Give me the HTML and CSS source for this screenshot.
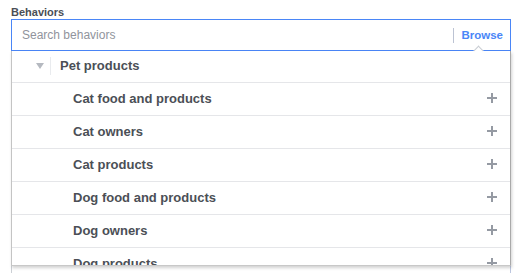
FILE: index.html
```html
<!DOCTYPE html>
<html lang="en">
<head>
    <meta charset="UTF-8">
    <meta name="viewport" content="width=device-width, initial-scale=1.0">
    <link rel="stylesheet" href="styles.css">
    <title>Behaviors</title>
</head>
<body>

<div class="field">
    <label class="fieldLabel">Behaviors</label>

    <!-- Search box -->
    <div class="searchBox">
        <span class="placeholder">Search behaviors</span>
        <span class="divider"></span>
        <span class="browse">Browse</span>
    </div>

    <!-- Panel under the dropdown -->
    <div class="underPanel"></div>

    <!-- Dropdown list -->
    <div class="dropdown">
        <div class="row groupRow">
            <span class="caret"></span>
            <span class="groupDivider"></span>
            <span class="groupName">Pet products</span>
        </div>
        <div class="row item"><span>Cat food and products</span><span class="plus"></span></div>
        <div class="row item"><span>Cat owners</span><span class="plus"></span></div>
        <div class="row item"><span>Cat products</span><span class="plus"></span></div>
        <div class="row item"><span>Dog food and products</span><span class="plus"></span></div>
        <div class="row item"><span>Dog owners</span><span class="plus"></span></div>
        <div class="row item"><span>Dog products</span><span class="plus"></span></div>
    </div>
    <span class="notch"></span>
</div>

</body>
</html>
```

FILE: styles.css
```css
body {
    margin: 0;
    font-family: 'Liberation Sans', Arial, sans-serif;
    background: #fff;
    color: #4b4f56;
}

.field {
    position: relative;
    padding: 5px 11px 0 11px;
    width: 500px;
}

.fieldLabel {
    display: block;
    font-size: 11px;
    font-weight: bold;
    line-height: 14px;
    color: #4b4f56;
}

.searchBox {
    display: flex;
    align-items: center;
    height: 30px;
    border: 1px solid #4a86f7;
    padding: 0 7px 0 10px;
}

.placeholder {
    flex: 1;
    font-size: 12px;
    color: #90949c;
}

.divider {
    width: 1px;
    height: 15px;
    background: #bcc3d3;
    margin-right: 7px;
}

.browse {
    font-size: 11.5px;
    font-weight: bold;
    color: #4a86f7;
}

.underPanel {
    height: 198px;
    margin-top: 24px;
    border-left: 1px solid #ccd0d5;
    border-right: 1px solid #bdc7e0;
}

.dropdown {
    position: absolute;
    top: 51px;
    left: 11px;
    width: 498px;
    height: 214px;
    overflow: hidden;
    background: #fff;
    border-left: 1px solid #c4c4c4;
    border-right: 1px solid #a9a9a9;
    border-bottom: 1px solid #c8c8c8;
    box-shadow: 1px 2px 3px rgba(0, 0, 0, 0.18);
}

.notch {
    position: absolute;
    top: 47px;
    left: 475px;
    width: 6px;
    height: 6px;
    background: #fff;
    border-left: 1px solid #c8ccd2;
    border-top: 1px solid #c8ccd2;
    transform: rotate(45deg);
}

.row {
    display: flex;
    align-items: center;
    border-bottom: 1px solid #e5e6e9;
    padding-bottom: 2px;
    font-size: 13px;
    font-weight: bold;
}

.groupRow {
    height: 29px;
    padding-left: 24px;
}

.caret {
    width: 0;
    height: 0;
    border-left: 4px solid transparent;
    border-right: 4px solid transparent;
    border-top: 6px solid #b5b9c0;
    margin-right: 6px;
}

.groupDivider {
    width: 1px;
    height: 18px;
    background: #e9ebee;
    margin-right: 9px;
}

.item {
    height: 30px;
    justify-content: space-between;
    padding-left: 61px;
    padding-right: 13px;
}

.plus {
    position: relative;
    width: 10px;
    height: 10px;
}

.plus::before,
.plus::after {
    content: "";
    position: absolute;
    background: #959aa3;
}

.plus::before {
    left: 0;
    top: 4px;
    width: 10px;
    height: 2px;
}

.plus::after {
    left: 4px;
    top: 0;
    width: 2px;
    height: 10px;
}
```
